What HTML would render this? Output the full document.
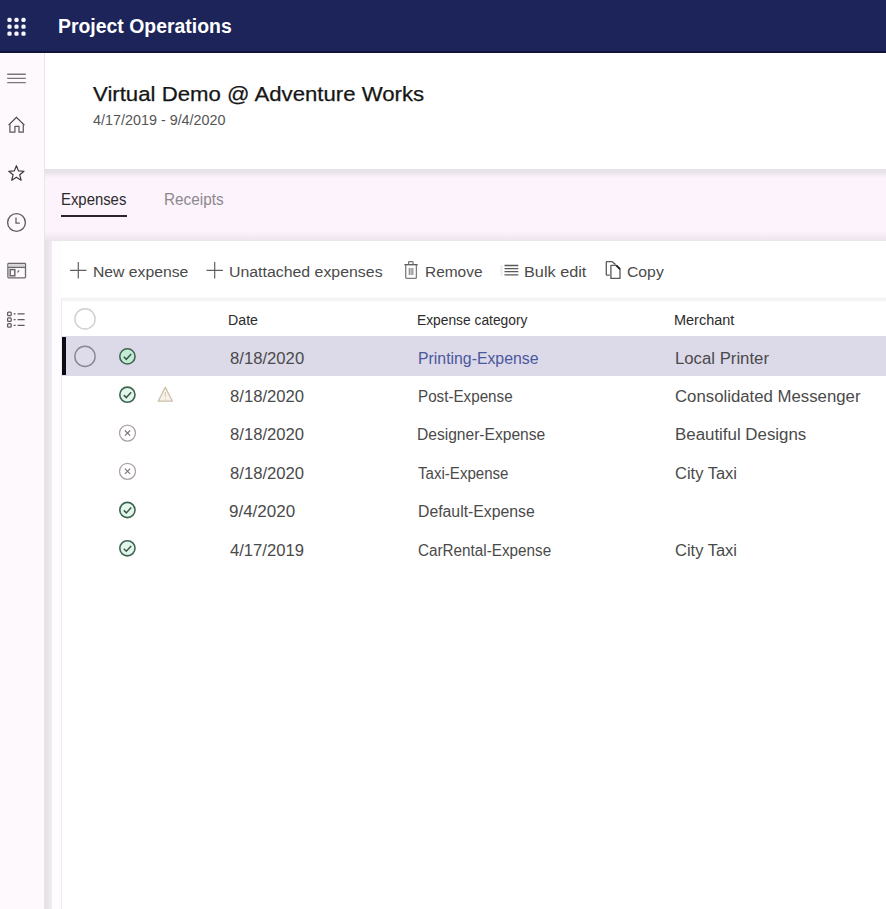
<!DOCTYPE html>
<html lang="en">
<head>
<meta charset="utf-8">
<title>Project Operations</title>
<style>
html,body{margin:0;padding:0;}
body{width:886px;height:909px;overflow:hidden;position:relative;background:#fff;font-family:"Liberation Sans",sans-serif;color:#333;}
.abs{position:absolute;}
.t{position:absolute;white-space:nowrap;transform-origin:0 0;line-height:1;}
#hdr{left:0;top:0;width:886px;height:53px;background:#1d2459;border-bottom:2px solid #10143a;box-sizing:border-box;}
#side{left:0;top:53px;width:44px;height:857px;background:#fdf9fd;border-right:1px solid #e9e4ea;box-sizing:content-box;}
#top{left:45px;top:53px;width:841px;height:116px;background:#fff;}
#band{left:45px;top:169px;width:841px;height:740px;background:#fcf3fc;}
#bandsh{left:45px;top:168.5px;width:841px;height:9px;background:linear-gradient(#e4e0e5,#eae5ea 45%,#f5eef6 75%,#fcf3fc);}
#gut{left:45px;top:238px;width:7px;height:671px;background:linear-gradient(90deg,#e4e0e5,#ebe7ec 60%,#f1edf2);}
#card{left:52px;top:241px;width:834px;height:668px;background:linear-gradient(90deg,#fefcfe 9px,#fff 10px);}
#cardsh{left:45px;top:230px;width:841px;height:11px;background:linear-gradient(#fcf3fc,#f7eef7 45%,#ebe4eb);}
#tbsh{left:60.5px;top:297px;width:826px;height:5px;background:linear-gradient(#fff,#f3f0f4 40%,#f5f3f6 60%,#fff);}
#grid{left:61px;top:299px;width:825px;height:610px;border-left:1px solid #efeaf0;box-sizing:border-box;}
#sel{left:62px;top:336.2px;width:824px;height:39.6px;background:#dcd9e9;}
#selbar{left:61.8px;top:337.2px;width:4.3px;height:37.8px;background:#0c0a12;}
svg{position:absolute;overflow:visible;}
#t_title{-webkit-text-stroke:0.25px #161616;}
</style>
</head>
<body>
<div class="abs" id="hdr"></div>
<div class="abs" id="side"></div>
<div class="abs" id="top"></div>
<div class="abs" id="band"></div>
<div class="abs" id="bandsh"></div>
<div class="abs" id="gut"></div>
<div class="abs" id="cardsh"></div>
<div class="abs" id="card"></div>
<div class="abs" id="tbsh"></div>
<div class="abs" id="grid"></div>
<div class="abs" id="sel"></div>
<div class="abs" id="selbar"></div>

<span class="t" id="t_app" style="left:57.56px;top:16.07px;font-size:20px;color:#fff;font-weight:bold;transform:scaleX(0.9707);">Project Operations</span>
<span class="t" id="t_title" style="left:92.88px;top:84.25px;font-size:20.5px;color:#161616;transform:scaleX(1.082);">Virtual Demo @ Adventure Works</span>
<span class="t" id="t_sub" style="left:92.65px;top:112.58px;font-size:14.2px;color:#555;transform:scaleX(1.0122);">4/17/2019 - 9/4/2020</span>
<span class="t" id="t_tab1" style="left:61.41px;top:192.46px;font-size:16px;color:#2b2b2b;transform:scaleX(0.9296);">Expenses</span>
<span class="t" id="t_tab2" style="left:163.73px;top:192.46px;font-size:16px;color:#8c888c;transform:scaleX(0.9579);">Receipts</span>
<span class="t" id="t_b1" style="left:92.65px;top:263.88px;font-size:15.5px;color:#4a4a4a;transform:scaleX(1.0155);">New expense</span>
<span class="t" id="t_b2" style="left:228.9px;top:263.88px;font-size:15.5px;color:#4a4a4a;transform:scaleX(1.0242);">Unattached expenses</span>
<span class="t" id="t_b3" style="left:425.46px;top:263.88px;font-size:15.5px;color:#4a4a4a;transform:scaleX(0.9957);">Remove</span>
<span class="t" id="t_b4" style="left:523.67px;top:263.88px;font-size:15.5px;color:#4a4a4a;transform:scaleX(1.0486);">Bulk edit</span>
<span class="t" id="t_b5" style="left:626.84px;top:263.88px;font-size:15.5px;color:#4a4a4a;transform:scaleX(1.0156);">Copy</span>
<span class="t" id="t_h1" style="left:228.11px;top:312.75px;font-size:14px;color:#2b2b2b;transform:scaleX(1.0128);">Date</span>
<span class="t" id="t_h2" style="left:417.33px;top:312.75px;font-size:14px;color:#2b2b2b;transform:scaleX(0.9848);">Expense category</span>
<span class="t" id="t_h3" style="left:673.85px;top:312.75px;font-size:14px;color:#2b2b2b;transform:scaleX(1.034);">Merchant</span>
<span class="t" id="t_d1" style="left:230.21px;top:351.26px;font-size:16px;color:#4a4a4a;transform:scaleX(1.0418);">8/18/2020</span>
<span class="t" id="t_c1" style="left:418.06px;top:351.26px;font-size:16px;color:#4a589c;transform:scaleX(0.9885);">Printing-Expense</span>
<span class="t" id="t_m1" style="left:675.11px;top:351.26px;font-size:16px;color:#4a4a4a;transform:scaleX(1.046);">Local Printer</span>
<span class="t" id="t_d2" style="left:230.12px;top:389.46px;font-size:16px;color:#4a4a4a;transform:scaleX(1.0404);">8/18/2020</span>
<span class="t" id="t_c2" style="left:417.78px;top:389.46px;font-size:16px;color:#4a4a4a;transform:scaleX(0.9496);">Post-Expense</span>
<span class="t" id="t_m2" style="left:674.91px;top:389.46px;font-size:16px;color:#4a4a4a;transform:scaleX(1.0481);">Consolidated Messenger</span>
<span class="t" id="t_d3" style="left:230.12px;top:427.06px;font-size:16px;color:#4a4a4a;transform:scaleX(1.0404);">8/18/2020</span>
<span class="t" id="t_c3" style="left:417.2px;top:427.06px;font-size:16px;color:#4a4a4a;transform:scaleX(0.9738);">Designer-Expense</span>
<span class="t" id="t_m3" style="left:674.93px;top:427.06px;font-size:16px;color:#4a4a4a;transform:scaleX(1.0544);">Beautiful Designs</span>
<span class="t" id="t_d4" style="left:230.12px;top:465.86px;font-size:16px;color:#4a4a4a;transform:scaleX(1.0404);">8/18/2020</span>
<span class="t" id="t_c4" style="left:418.44px;top:465.86px;font-size:16px;color:#4a4a4a;transform:scaleX(0.9423);">Taxi-Expense</span>
<span class="t" id="t_m4" style="left:675.1px;top:465.86px;font-size:16px;color:#4a4a4a;transform:scaleX(1.0296);">City Taxi</span>
<span class="t" id="t_d5" style="left:229.28px;top:503.86px;font-size:16px;color:#4a4a4a;transform:scaleX(1.0612);">9/4/2020</span>
<span class="t" id="t_c5" style="left:417.53px;top:503.86px;font-size:16px;color:#4a4a4a;transform:scaleX(0.9867);">Default-Expense</span>
<span class="t" id="t_d6" style="left:230.12px;top:542.86px;font-size:16px;color:#4a4a4a;transform:scaleX(1.0387);">4/17/2019</span>
<span class="t" id="t_c6" style="left:417.91px;top:542.86px;font-size:16px;color:#4a4a4a;transform:scaleX(0.9534);">CarRental-Expense</span>
<span class="t" id="t_m6" style="left:675.1px;top:542.86px;font-size:16px;color:#4a4a4a;transform:scaleX(1.0296);">City Taxi</span>
<div class="abs" id="tabul" style="left:60.8px;top:215.4px;width:66.2px;height:2.1px;background:#2a2533;"></div>
<svg width="886" height="909" viewBox="0 0 886 909" style="left:0;top:0;" fill="none">
<g fill="#f6f6ff">
<rect x="7.4" y="17.7" width="4.2" height="4.2" rx="1.5"/>
<rect x="14.4" y="17.7" width="4.2" height="4.2" rx="1.5"/>
<rect x="21.4" y="17.7" width="4.2" height="4.2" rx="1.5"/>
<rect x="7.4" y="24.6" width="4.2" height="4.2" rx="1.5"/>
<rect x="14.4" y="24.6" width="4.2" height="4.2" rx="1.5"/>
<rect x="21.4" y="24.6" width="4.2" height="4.2" rx="1.5"/>
<rect x="7.4" y="31.5" width="4.2" height="4.2" rx="1.5"/>
<rect x="14.4" y="31.5" width="4.2" height="4.2" rx="1.5"/>
<rect x="21.4" y="31.5" width="4.2" height="4.2" rx="1.5"/>
</g>
<g stroke="#7a787d" stroke-width="1.35"><path d="M7.2 74.2H25.8M7.2 78.4H25.8M7.2 82.6H25.8"/></g>
<g stroke="#454347" stroke-width="1.25" stroke-linejoin="miter"><path d="M8.6 125.1L16.4 117.4L24.4 125.1"/><path stroke="#5c5a5e" stroke-linejoin="round" d="M9.9 124.3V132.2H14.9V126.4H19V132.2H23.3V124.3"/></g>
<polygon points="16.40,165.70 18.46,170.87 24.01,171.23 19.73,174.78 21.10,180.17 16.40,177.20 11.70,180.17 13.07,174.78 8.79,171.23 14.34,170.87" stroke="#3a383c" stroke-width="1.2" stroke-linejoin="round"/>
<g stroke="#5e5c60" stroke-width="1.35"><circle cx="16.5" cy="222.5" r="8.9"/><path d="M16 217.5V223H19.8" stroke-width="1.25"/></g>
<g stroke="#6a686c" stroke-width="1.3"><rect x="7.9" y="263.5" width="17.6" height="14.3" rx="0.8"/><rect x="8.5" y="264.1" width="16.4" height="3" fill="#d9d7da" stroke="none"/><path d="M7.9 267.4H25.5"/><rect x="10.2" y="269.6" width="4.6" height="6.2" stroke-width="1.5"/><path d="M17.4 272.4L19.2 270.4" stroke-width="1.2"/></g>
<g stroke="#5e5c60" stroke-width="1.25">
<rect x="7.6" y="312.1" width="3.6" height="3.6" rx="0.9"/><path d="M13.7 313.9H15.6M17.6 313.9H24.6"/>
<rect x="7.6" y="317.8" width="3.6" height="3.6" rx="0.9"/><path d="M13.7 319.6H15.6M17.6 319.6H24.6"/>
<rect x="7.6" y="323.5" width="3.6" height="3.6" rx="0.9"/><path d="M13.7 325.3H15.6M17.6 325.3H24.6"/>
</g>
<path d="M70.1 270.3H86.5M78.3 262V278.6" stroke="#606060" stroke-width="1.2"/>
<path d="M206.5 270.3H222.9M214.7 262V278.6" stroke="#606060" stroke-width="1.2"/>
<g stroke="#555" stroke-width="1.3"><path d="M404.4 264.7H417.7"/><path d="M408.6 264.5V262.2Q408.6 261.6 409.2 261.6H412.4Q413 261.6 413 262.2V264.5" stroke="#777"/><path d="M405.7 264.7V277.2Q405.7 278.4 406.9 278.4H415.2Q416.4 278.4 416.4 277.2V264.7" stroke="#7c7c7c"/><path d="M409.3 268V275M411.05 268V275M412.8 268V275" stroke="#8a8a8a" stroke-width="1.2"/></g>
<g stroke="#5a5a5a" stroke-width="1.3"><path d="M504.5 265.5H518.3M504.5 268.6H518.3M504.5 271.7H518.3M504.5 274.9H518.3"/></g><rect x="500.4" y="265" width="2" height="10.5" fill="#ececec"/>
<g stroke="#5a5a5a" stroke-width="1.3" stroke-linejoin="round"><path d="M609.8 275.2H606.9Q606.3 275.2 606.3 274.6V262.3Q606.3 261.7 606.9 261.7H612.2L615.6 264.6"/><path d="M610.9 265.4H616.3L620 269.2V278.4H610.9Z"/><path d="M616.3 265.4L620 269.2" stroke="#222" stroke-width="1.8"/></g>
<circle cx="85" cy="318.9" r="10.1" stroke="#d2ced3" stroke-width="1.4" fill="#fff"/>
<circle cx="85" cy="356.4" r="10.1" stroke="#8a8691" stroke-width="1.4" fill="#dedbea"/>
<circle cx="127.4" cy="356.4" r="7.6" stroke="#3f6552" stroke-width="1.6" fill="#c4ebd5"/><path d="M123.8 356.8L126.3 359.3L131.2 354.0" stroke="#38594a" stroke-width="1.5"/>
<circle cx="127.4" cy="394.7" r="7.6" stroke="#3f6552" stroke-width="1.6" fill="#e2f6eb"/><path d="M123.8 395.1L126.3 397.6L131.2 392.3" stroke="#38594a" stroke-width="1.5"/>
<circle cx="127.4" cy="510.0" r="7.6" stroke="#3f6552" stroke-width="1.6" fill="#e2f6eb"/><path d="M123.8 510.4L126.3 512.9L131.2 507.6" stroke="#38594a" stroke-width="1.5"/>
<circle cx="127.4" cy="548.3" r="7.6" stroke="#3f6552" stroke-width="1.6" fill="#e2f6eb"/><path d="M123.8 548.7L126.3 551.2L131.2 545.9" stroke="#38594a" stroke-width="1.5"/>
<circle cx="127.5" cy="433.1" r="8" stroke="#aaa2a9" stroke-width="1.3" fill="#fff"/><path d="M124.9 430.5L130.1 435.7M130.1 430.5L124.9 435.7" stroke="#807079" stroke-width="1.1"/>
<circle cx="127.5" cy="471.3" r="8" stroke="#aaa2a9" stroke-width="1.3" fill="#fff"/><path d="M124.9 468.7L130.1 473.9M130.1 468.7L124.9 473.9" stroke="#807079" stroke-width="1.1"/>
<path d="M165.3 387.3L172.4 401.2H158.2Z" stroke="#cbbfa6" stroke-width="1.3" fill="#f8f3ea" stroke-linejoin="round"/><path d="M165.3 392V397" stroke="#d6ccb8" stroke-width="1.2"/><circle cx="165.3" cy="399" r="0.7" fill="#d6ccb8"/>
</svg>
</body>
</html>
